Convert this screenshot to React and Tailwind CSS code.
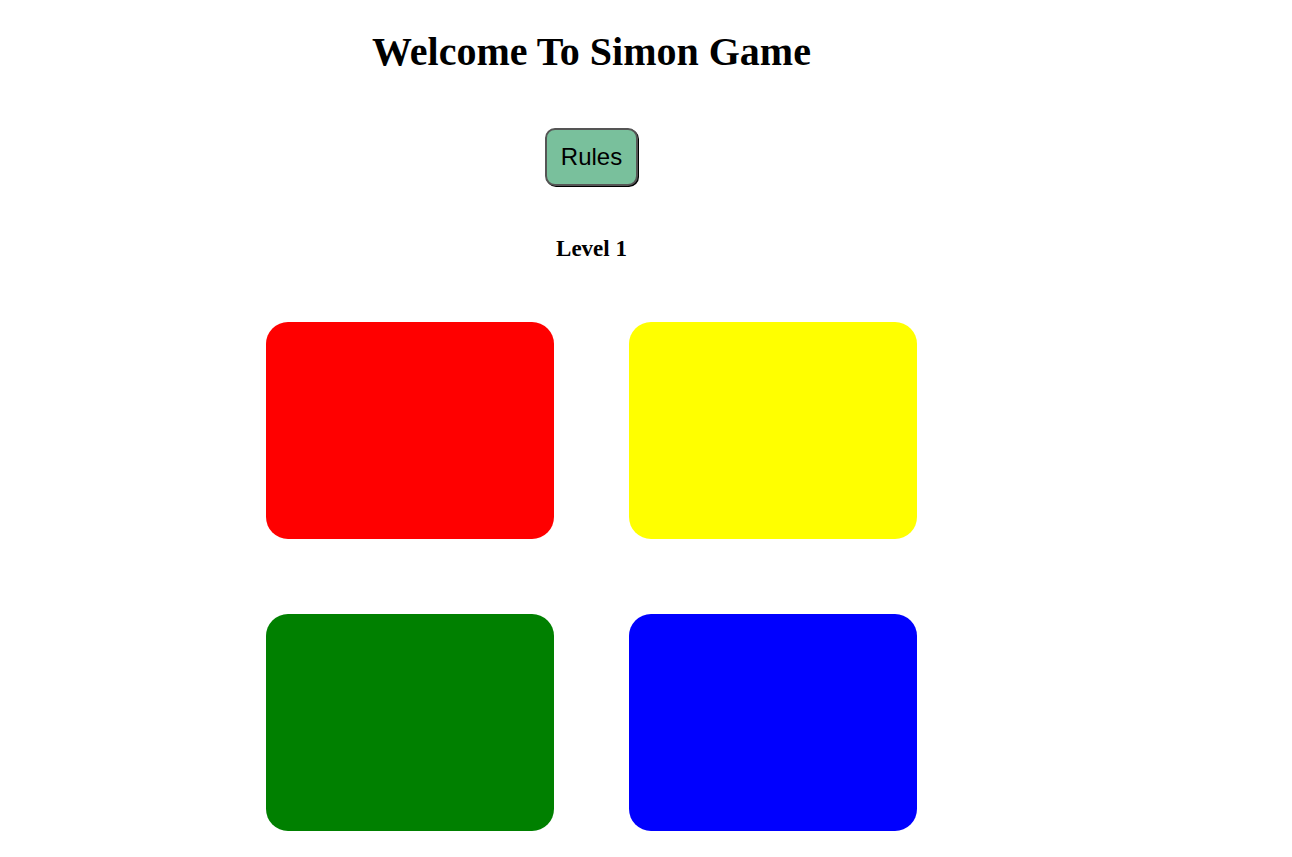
import React from "react";

const colors = ["bg-[#ff0000]", "bg-[#ffff00]", "bg-[#008000]", "bg-[#0000ff]"];

const App = () => {
  return (
    <div className="w-[1183px] bg-white" style={{ fontFamily: "'Liberation Serif', serif" }}>
      {/* header */}
      <div className="flex flex-col items-center">
        <h1 className="mt-[28px] text-[40px] leading-[48px] font-bold text-black">
          Welcome To Simon Game
        </h1>
        <button
          className="mt-[52px] w-[93px] h-[58px] rounded-[10px] border-2 border-[#555] bg-[#79c09c] text-[24px] text-black shadow-[1px_1px_0_#000]"
          style={{ fontFamily: "'Liberation Sans', sans-serif" }}
        >
          Rules
        </button>
        <h3 className="mt-[49px] text-[23px] leading-[28px] font-bold text-black">Level 1</h3>
      </div>

      {/* game board */}
      <div className="mt-[59px] grid grid-cols-[288px_288px] justify-center gap-[75px]">
        {colors.map((c) => (
          <div key={c} className={`${c} h-[217px] rounded-[22px]`} />
        ))}
      </div>
    </div>
  );
};

export default App;
